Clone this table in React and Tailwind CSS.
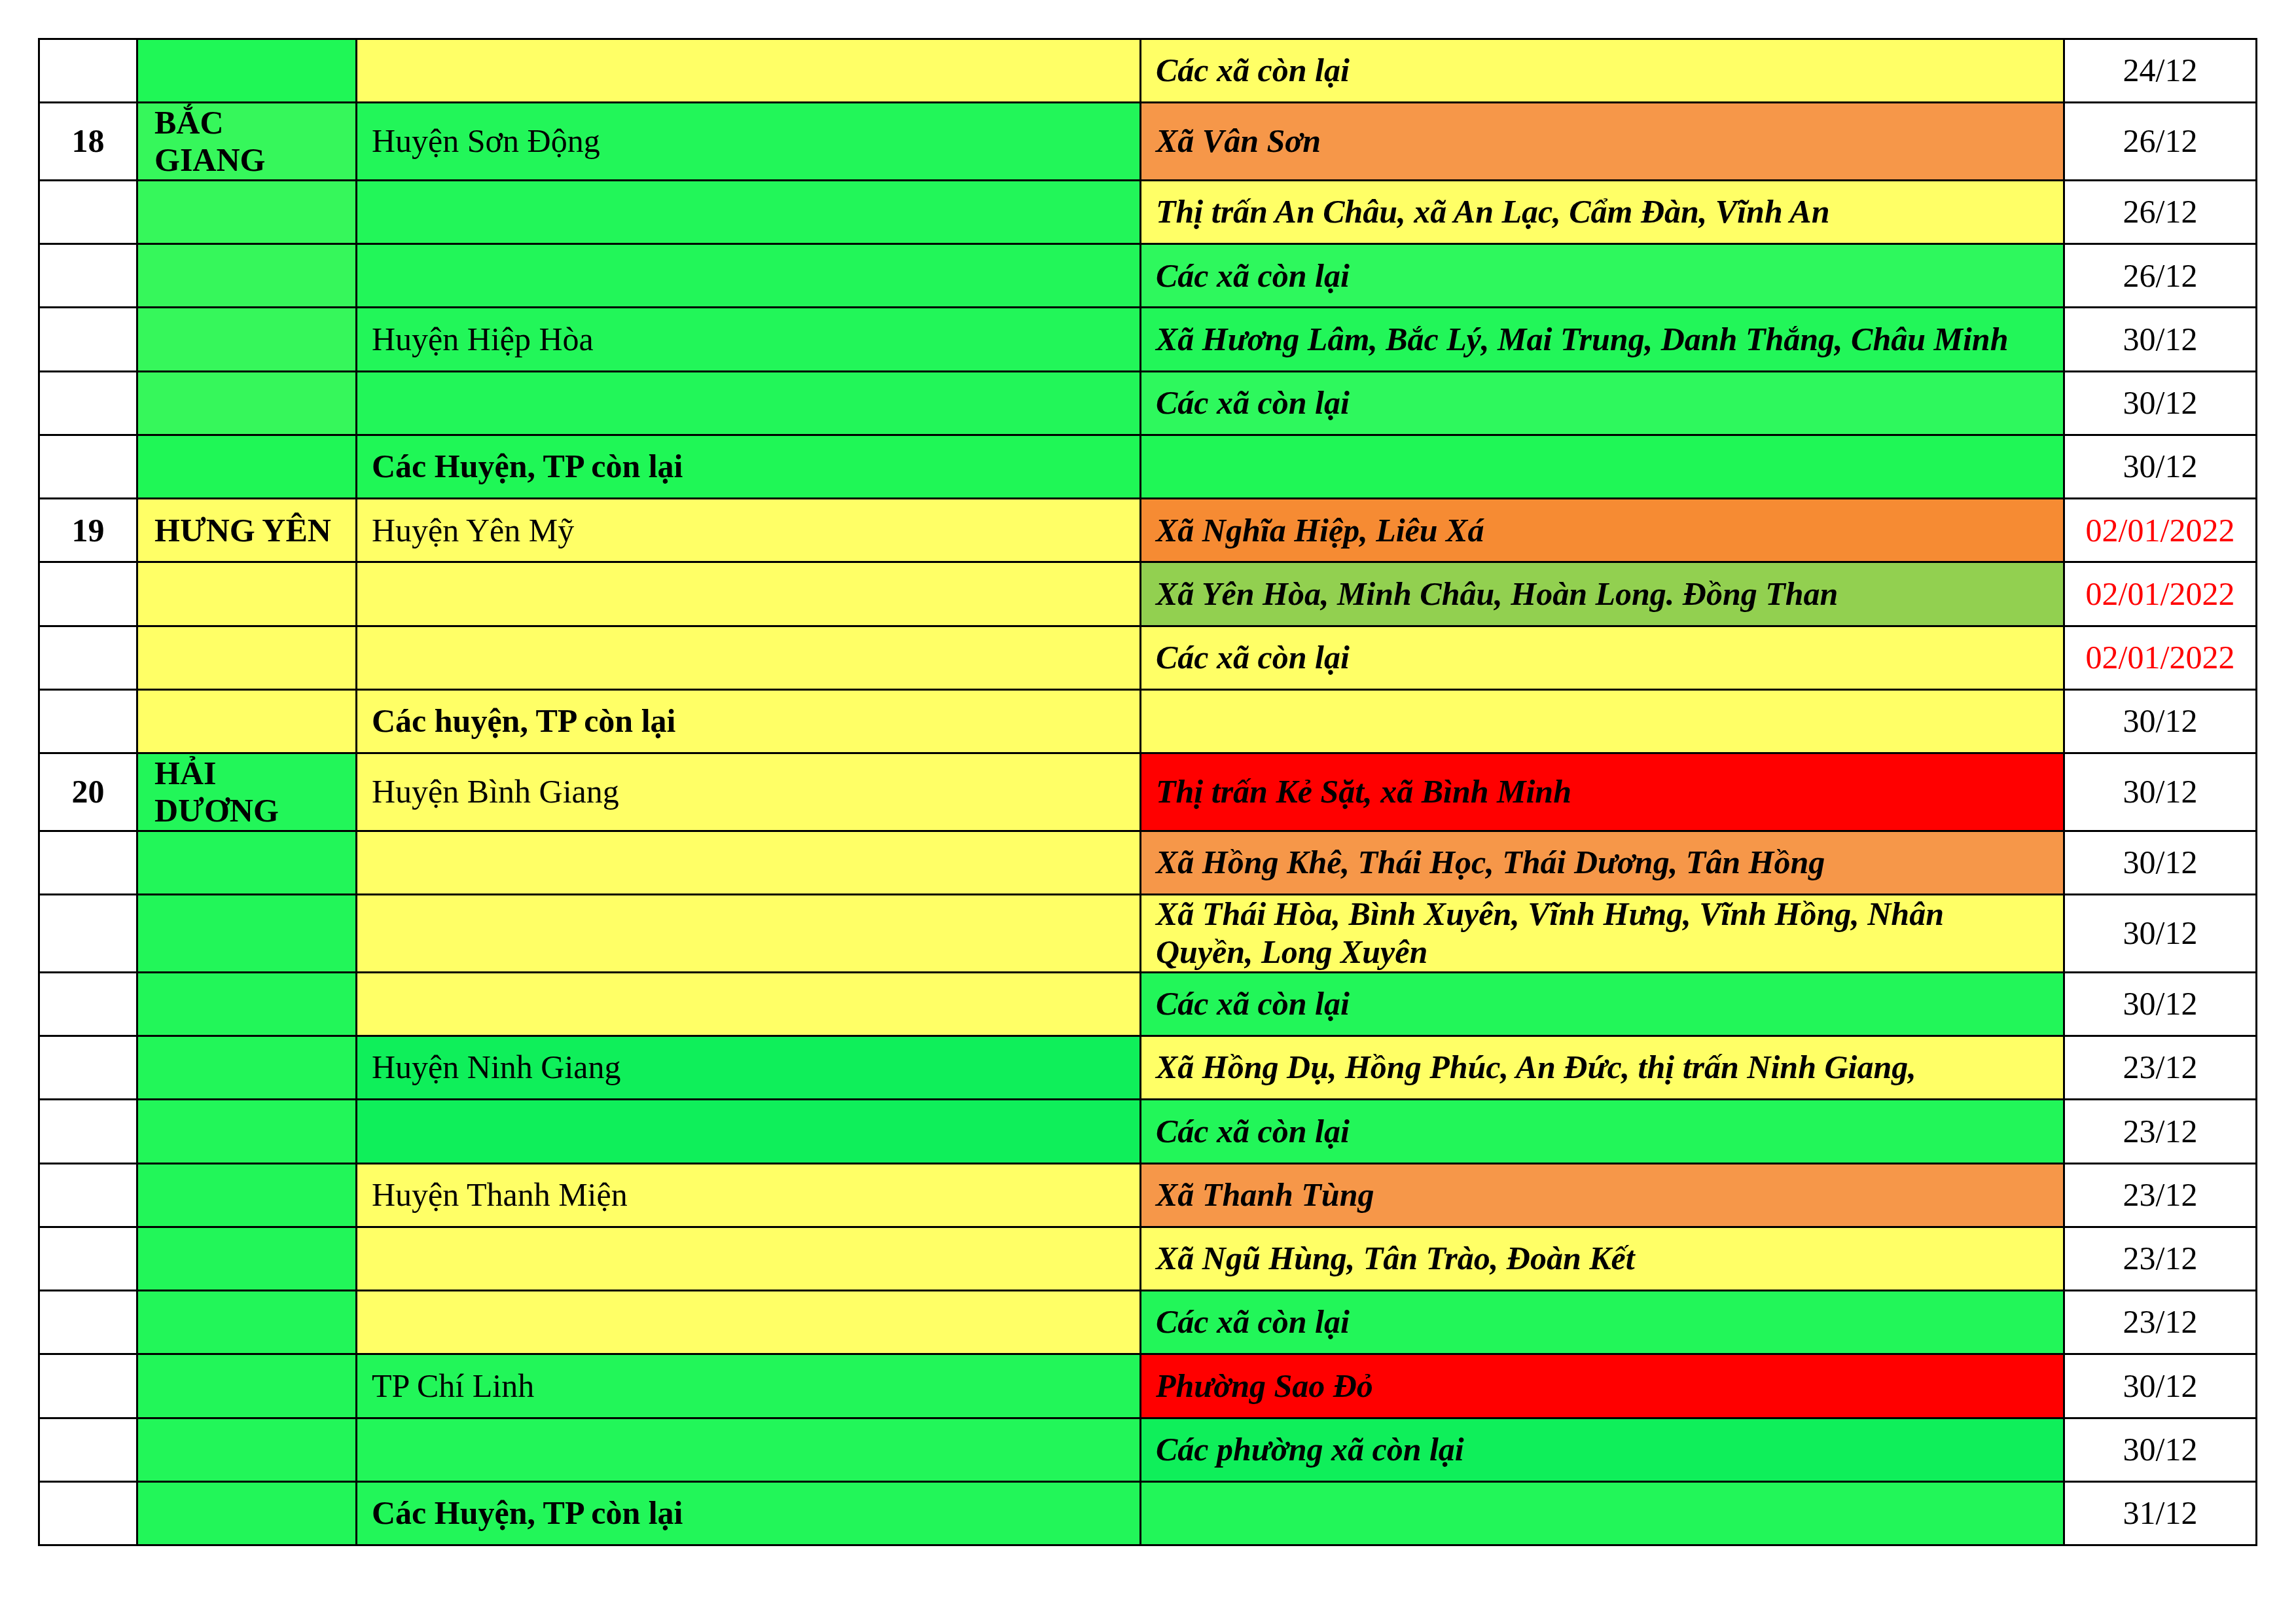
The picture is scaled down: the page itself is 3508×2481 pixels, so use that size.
import React from 'react';

// cell colours taken from the sheet
const Y = 'bg-[#ffff66]';
const GA = 'bg-[#1ff756]';
const GL = 'bg-[#36f75b]';
const GB = 'bg-[#22f659]';
const GC = 'bg-[#2ef85d]';
const GD = 'bg-[#0fef5a]';
const O = 'bg-[#f69749]';
const OD = 'bg-[#f68b33]';
const OL = 'bg-[#92d050]';
const R = 'bg-[#ff0000]';

const ROWS = [
  { c2: GA, c3: Y, c4: Y, xa: 'Các xã còn lại', date: '24/12' },
  { num: '18', tinh: ['BẮC', 'GIANG'], c2: GL, huyen: 'Huyện Sơn Động', c3: GB, xa: 'Xã Vân Sơn', c4: O, date: '26/12', tall: true },
  { c2: GL, c3: GB, xa: 'Thị trấn An Châu, xã An Lạc, Cẩm Đàn, Vĩnh An', c4: Y, date: '26/12' },
  { c2: GL, c3: GB, xa: 'Các xã còn lại', c4: GC, date: '26/12' },
  { c2: GL, huyen: 'Huyện Hiệp Hòa', c3: GB, xa: 'Xã Hương Lâm, Bắc Lý, Mai Trung, Danh Thắng, Châu Minh', c4: GB, date: '30/12' },
  { c2: GL, c3: GB, xa: 'Các xã còn lại', c4: GC, date: '30/12' },
  { c2: GA, huyen: 'Các Huyện, TP còn lại', bold: true, c3: GA, c4: GA, date: '30/12' },
  { num: '19', tinh: ['HƯNG YÊN'], c2: Y, huyen: 'Huyện Yên Mỹ', c3: Y, xa: 'Xã Nghĩa Hiệp, Liêu Xá', c4: OD, date: '02/01/2022', red: true },
  { c2: Y, c3: Y, xa: 'Xã Yên Hòa, Minh Châu, Hoàn Long. Đồng Than', c4: OL, date: '02/01/2022', red: true },
  { c2: Y, c3: Y, xa: 'Các xã còn lại', c4: Y, date: '02/01/2022', red: true },
  { c2: Y, huyen: 'Các huyện, TP còn lại', bold: true, c3: Y, c4: Y, date: '30/12' },
  { num: '20', tinh: ['HẢI', 'DƯƠNG'], c2: GB, huyen: 'Huyện Bình Giang', c3: Y, xa: 'Thị trấn Kẻ Sặt, xã Bình Minh', c4: R, date: '30/12', tall: true },
  { c2: GB, c3: Y, xa: 'Xã Hồng Khê, Thái Học, Thái Dương, Tân Hồng', c4: O, date: '30/12' },
  { c2: GB, c3: Y, xa: ['Xã Thái Hòa, Bình Xuyên, Vĩnh Hưng, Vĩnh Hồng, Nhân', 'Quyền, Long Xuyên'], c4: Y, date: '30/12', tall: true },
  { c2: GB, c3: Y, xa: 'Các xã còn lại', c4: GB, date: '30/12' },
  { c2: GB, huyen: 'Huyện Ninh Giang', c3: GD, xa: 'Xã Hồng Dụ, Hồng Phúc, An Đức, thị trấn Ninh Giang,', c4: Y, date: '23/12' },
  { c2: GB, c3: GD, xa: 'Các xã còn lại', c4: GB, date: '23/12' },
  { c2: GB, huyen: 'Huyện Thanh Miện', c3: Y, xa: 'Xã Thanh Tùng', c4: O, date: '23/12' },
  { c2: GB, c3: Y, xa: 'Xã Ngũ Hùng, Tân Trào, Đoàn Kết', c4: Y, date: '23/12' },
  { c2: GB, c3: Y, xa: 'Các xã còn lại', c4: GB, date: '23/12' },
  { c2: GB, huyen: 'TP Chí Linh', c3: GB, xa: 'Phường Sao Đỏ', c4: R, date: '30/12' },
  { c2: GB, c3: GB, xa: 'Các phường xã còn lại', c4: GD, date: '30/12' },
  { c2: GB, huyen: 'Các Huyện, TP còn lại', bold: true, c3: GB, c4: GB, date: '31/12' },
];

function Lines({ value }) {
  if (!value) return null;
  const parts = Array.isArray(value) ? value : [value];
  return parts.map((p, i) => (
    <React.Fragment key={i}>
      {i > 0 && <br />}
      {p}
    </React.Fragment>
  ));
}

const cell = 'border-[3px] border-black align-middle p-0';

export default function App() {
  return (
    <div className="w-[3508px] h-[2481px] bg-white pt-[58px] pl-[58px] text-black font-['Liberation_Serif','Times_New_Roman',serif] text-[50px] leading-[1.15]">
      <table className="table-fixed border-collapse w-[3391px]">
        <colgroup>
          <col className="w-[150px]" />
          <col className="w-[335px]" />
          <col className="w-[1198px]" />
          <col className="w-[1411px]" />
          <col className="w-[294px]" />
        </colgroup>
        <tbody>
          {ROWS.map((r, i) => (
            <tr key={i} className={r.tall ? 'h-[118.7px]' : 'h-[97.25px]'}>
              <td className={`${cell} bg-white text-center font-bold`}>{r.num}</td>
              <td className={`${cell} ${r.c2} px-[25px] font-bold`}>
                <Lines value={r.tinh} />
              </td>
              <td className={`${cell} ${r.c3} px-[22px] ${r.bold ? 'font-bold' : ''}`}>{r.huyen}</td>
              <td className={`${cell} ${r.c4} px-[22px] font-bold italic`}>
                <Lines value={r.xa} />
              </td>
              <td className={`${cell} bg-white text-center ${r.red ? 'text-[#ff0000]' : ''}`}>{r.date}</td>
            </tr>
          ))}
        </tbody>
      </table>
    </div>
  );
}
